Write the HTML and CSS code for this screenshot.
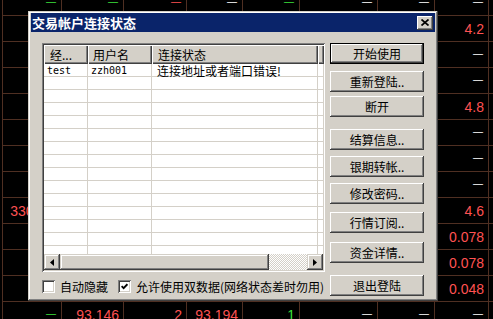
FILE: index.html
```html
<!DOCTYPE html>
<html lang="zh-CN">
<head>
  <meta charset="UTF-8">
  <title>交易帐户连接状态</title>
  <link rel="stylesheet" href="styles.css">
</head>
<body>

<!-- Quote board behind the dialog -->
<div class="board">
  <span class="g"><i>—</i></span><span class="g"><i>—</i></span><span><i>—</i></span><span class="w"><i>—</i></span><span class="g"><i>—</i></span><span class="w"><i>—</i></span><span class="w"><i>—</i></span><span class="w"><i>—</i></span><span></span>
  <span></span><span></span><span></span><span></span><span></span><span></span><span></span><span>4.2</span><span></span>
  <span></span><span></span><span></span><span></span><span></span><span></span><span></span><span class="w"><i>—</i></span><span></span>
  <span></span><span></span><span></span><span></span><span></span><span></span><span></span><span class="w"><i>—</i></span><span></span>
  <span></span><span></span><span></span><span></span><span></span><span></span><span></span><span>4.8</span><span></span>
  <span></span><span></span><span></span><span></span><span></span><span></span><span></span><span class="w"><i>—</i></span><span></span>
  <span></span><span></span><span></span><span></span><span></span><span></span><span></span><span class="w"><i>—</i></span><span></span>
  <span></span><span></span><span></span><span></span><span></span><span></span><span></span><span class="w"><i>—</i></span><span></span>
  <span>330000</span><span></span><span></span><span></span><span></span><span></span><span></span><span>4.6</span><span></span>
  <span></span><span></span><span></span><span></span><span></span><span></span><span></span><span>0.078</span><span></span>
  <span></span><span></span><span></span><span></span><span></span><span></span><span></span><span>0.078</span><span></span>
  <span></span><span></span><span></span><span></span><span></span><span></span><span></span><span>0.048</span><span></span>
  <span class="g"><i>—</i></span><span>93.146</span><span>2</span><span>93.194</span><span class="g">1</span><span class="w"><i>—</i></span><span class="w"><i>—</i></span><span class="w"><i>—</i></span><span></span>
</div>

<!-- Account connection dialog -->
<div class="dlg">
  <div class="titlebar">
    <span class="title">交易帐户连接状态</span>
    <span class="close">
      <svg width="8" height="7" viewBox="0 0 8 7"><path d="M0.5 0.5L7.5 6.5M7.5 0.5L0.5 6.5" stroke="#000" stroke-width="1.7"/></svg>
    </span>
  </div>
  <div class="client">
    <div class="left">
      <div class="listbox">
        <div class="lv-head">
          <span class="h c1">经...</span>
          <span class="h c2">用户名</span>
          <span class="h c3">连接状态</span>
          <span class="h c4"></span>
        </div>
        <div class="lv-body">
          <div class="row">
            <span class="c1 mono">test</span>
            <span class="c2 mono">zzh001</span>
            <span class="c3">连接地址或者端口错误!</span>
          </div>
        </div>
        <div class="hscroll">
          <span class="arrow"><svg width="4" height="7" viewBox="0 0 4 7"><path d="M4 0L0 3.5L4 7Z" fill="#000"/></svg></span>
          <span class="thumb"></span>
          <span class="track"></span>
          <span class="arrow"><svg width="4" height="7" viewBox="0 0 4 7"><path d="M0 0L4 3.5L0 7Z" fill="#000"/></svg></span>
        </div>
      </div>
      <div class="checks">
        <span class="box"></span>
        <span class="lbl">自动隐藏</span>
        <span class="box second">
          <svg width="7" height="7" viewBox="0 0 7 7"><path d="M0.6 3.2L2.6 5.2L6.4 1.2" fill="none" stroke="#000" stroke-width="1.8"/></svg>
        </span>
        <span class="lbl">允许使用双数据(网络状态差时勿用)</span>
      </div>
    </div>
    <div class="btns">
      <button class="btn default">开始使用</button>
      <button class="btn m7">重新登陆..</button>
      <button class="btn m4">断开</button>
      <button class="btn m12">结算信息..</button>
      <button class="btn m6">银期转帐..</button>
      <button class="btn m6">修改密码..</button>
      <button class="btn m8">行情订阅..</button>
      <button class="btn m9">资金详情..</button>
      <button class="btn m12">退出登陆</button>
    </div>
  </div>
</div>

</body>
</html>
```

FILE: styles.css
```css
/* Classic window colours */
:root {
  --face: #d4d0c8;
  --light: #ffffff;
  --shadow: #808080;
  --dark: #404040;
  --grid: #4f2f22;
  --up: #ff5252;
  --green: #3ce03c;
  --cjk: "Noto Sans CJK SC", "Liberation Sans", sans-serif;
}
html, body {
  margin: 0;
  padding: 0;
}
body {
  width: 493px;
  height: 319px;
  background: #000;
  overflow: hidden;
  position: relative;
  font-family: "Liberation Sans", Arial, sans-serif;
}

/* Quote board */
.board {
  display: grid;
  grid-template-columns: 58px 61px 62px 55px 56px 77px 56px 53px 4px;
  grid-auto-rows: 25px;
  gap: 1px;
  padding: 1px 0 0 1px;
  margin: -11px 0 0 2px;
  width: max-content;
  background: var(--grid);
}
.board span {
  background: #000;
  display: flex;
  align-items: center;
  justify-content: flex-end;
  padding-right: 4px;
  font-size: 14px;
  color: var(--up);
  overflow: hidden;
}
.board span:nth-child(9n) { padding-right: 0; }
.board span.g { color: var(--green); }
.board span.w { color: #fff; }
.board i {
  font-style: normal;
  font-size: 10px;
  padding-right: 1px;
  position: relative;
  top: -1px;
}

/* Dialog window */
.dlg {
  position: absolute;
  left: 28px;
  top: 11px;
  width: 410px;
  height: 290px;
  box-sizing: border-box;
  padding: 2px 3px 3px 3px;
  background: var(--face);
  box-shadow: inset -1px -1px var(--dark), inset 1px 1px var(--face),
              inset -2px -2px var(--shadow), inset 2px 2px var(--light);
  font-family: var(--cjk);
  font-size: 12px;
  color: #000;
}
.titlebar {
  height: 19px;
  background: #0a246a;
  display: flex;
  align-items: center;
  justify-content: space-between;
  padding: 0 2px 0 1px;
}
.title {
  color: #fff;
  font-weight: 700;
  font-size: 13px;
}
.close {
  width: 16px;
  height: 14px;
  box-sizing: border-box;
  background: var(--face);
  box-shadow: inset -1px -1px var(--dark), inset 1px 1px var(--light),
              inset -2px -2px var(--shadow);
  display: flex;
  align-items: center;
  justify-content: center;
  padding-bottom: 1px;
}

.client {
  display: flex;
  gap: 5px;
  padding: 11px 11px 0 11px;
}
.left {
  width: 283px;
  display: flex;
  flex-direction: column;
}

/* List view */
.listbox {
  height: 229px;
  box-sizing: border-box;
  padding: 2px;
  background: #fff;
  box-shadow: inset 1px 1px var(--shadow), inset -1px -1px var(--light),
              inset 2px 2px var(--dark), inset -2px -2px var(--face);
  display: flex;
  flex-direction: column;
}
.lv-head {
  height: 19px;
  display: flex;
  flex: none;
}
.h {
  box-sizing: border-box;
  background: var(--face);
  box-shadow: inset 1px 1px var(--light), inset -1px -1px var(--dark),
              inset -2px -2px var(--shadow);
  display: flex;
  align-items: center;
  padding-left: 6px;
  line-height: 1;
}
.c1 { width: 44px; flex: none; }
.c2 { width: 64px; flex: none; }
.c3 { width: 166px; flex: none; }
.c4 { flex: 1; }
.h.c2 { padding-left: 5px; }

.lv-body {
  flex: 1;
  overflow: hidden;
  background-image:
    repeating-linear-gradient(to bottom, transparent 0 12px, var(--face) 12px 13px),
    linear-gradient(to right, transparent 43px, var(--face) 43px 44px, transparent 44px),
    linear-gradient(to right, transparent 107px, var(--face) 107px 108px, transparent 108px),
    linear-gradient(to right, transparent 273px, var(--face) 273px 274px, transparent 274px);
}
.row {
  height: 13px;
  display: flex;
  align-items: center;
  line-height: 12px;
}
.row span {
  box-sizing: border-box;
  padding-left: 3px;
  white-space: nowrap;
}
.row .c3 { padding-left: 5px; }
.mono {
  font-family: "DejaVu Sans Mono", monospace;
  font-size: 10px;
}

/* Horizontal scroll bar */
.hscroll {
  height: 16px;
  flex: none;
  display: flex;
}
.arrow, .thumb {
  box-sizing: border-box;
  background: var(--face);
  box-shadow: inset -1px -1px var(--dark), inset 1px 1px var(--face),
              inset -2px -2px var(--shadow), inset 2px 2px var(--light);
}
.arrow {
  width: 16px;
  display: flex;
  align-items: center;
  justify-content: center;
}
.thumb { width: 209px; }
.track {
  flex: 1;
  background: repeating-conic-gradient(#fff 0 25%, var(--face) 0 50%) 0 0 / 2px 2px;
}

/* Check boxes */
.checks {
  margin-top: 8px;
  height: 13px;
  display: flex;
  align-items: center;
  white-space: nowrap;
}
.box {
  width: 13px;
  height: 13px;
  flex: none;
  box-sizing: border-box;
  background: #fff;
  box-shadow: inset 1px 1px var(--shadow), inset -1px -1px var(--light),
              inset 2px 2px var(--dark), inset -2px -2px var(--face);
  display: flex;
  align-items: center;
  justify-content: center;
}
.box.second { margin-left: 10px; }
.lbl { margin-left: 5px; }

/* Command buttons */
.btns {
  width: 94px;
  display: flex;
  flex-direction: column;
}
.btn {
  height: 21px;
  width: 94px;
  border: none;
  margin: 0;
  padding: 0;
  font-family: var(--cjk);
  font-size: 12px;
  color: #000;
  background: var(--face);
  box-shadow: inset -1px -1px var(--dark), inset 1px 1px var(--light),
              inset -2px -2px var(--shadow);
}
.btn.default {
  box-shadow: inset 0 0 0 1px #000, inset -2px -2px var(--dark),
              inset 2px 2px var(--light), inset -3px -3px var(--shadow);
}
.m4 { margin-top: 4px; }
.m6 { margin-top: 6px; }
.m7 { margin-top: 7px; }
.m8 { margin-top: 8px; }
.m9 { margin-top: 9px; }
.m12 { margin-top: 12px; }
```
